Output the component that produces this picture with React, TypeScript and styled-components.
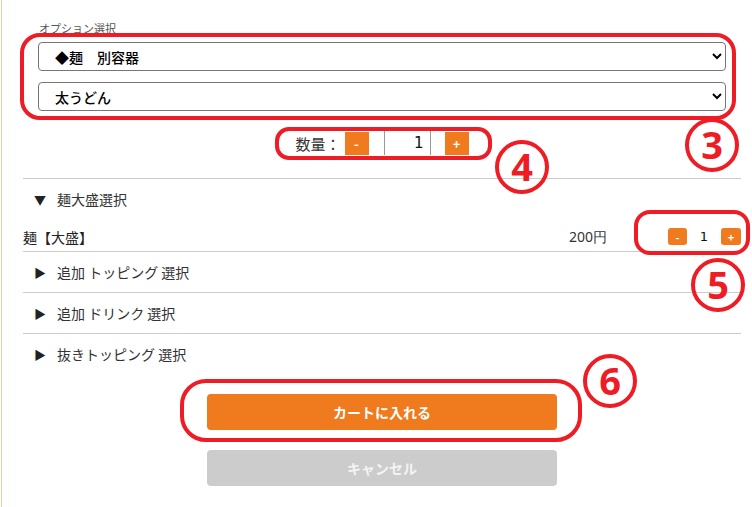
import styled, { createGlobalStyle } from 'styled-components';

const GlobalStyle = createGlobalStyle`
  body {
    margin: 0;
    background: #fff;
    font-family: "Noto Sans CJK JP", "Noto Sans", sans-serif;
    color: #333;
  }
`;

const App = () => {
  return (
    <>
      <GlobalStyle />
      <Page>
        <OptionBlock>
          <OptionLabel>オプション選択</OptionLabel>
          <Select defaultValue="a">
            <option value="a">◆麺　別容器</option>
          </Select>
          <Select defaultValue="b">
            <option value="b">太うどん</option>
          </Select>
        </OptionBlock>

        <QtyRow>
          <QtyLabel>数量：</QtyLabel>
          <SquareButton>-</SquareButton>
          <QtyInput>1</QtyInput>
          <SquareButton>+</SquareButton>
        </QtyRow>

        <Section>
          <SectionHead>
            <Arrow>▼</Arrow>麺大盛選択
          </SectionHead>
          <ItemRow>
            <ItemName>麺【大盛】</ItemName>
            <ItemPrice>200円</ItemPrice>
            <MiniCounter>
              <MiniButton>-</MiniButton>
              <MiniValue>1</MiniValue>
              <MiniButton>+</MiniButton>
            </MiniCounter>
          </ItemRow>
        </Section>
        <Section>
          <SectionHead>
            <Arrow>▶</Arrow>追加 トッピング 選択
          </SectionHead>
        </Section>
        <Section>
          <SectionHead>
            <Arrow>▶</Arrow>追加 ドリンク 選択
          </SectionHead>
        </Section>
        <Section>
          <SectionHead>
            <Arrow>▶</Arrow>抜きトッピング 選択
          </SectionHead>
        </Section>

        <Actions>
          <CartButton>カートに入れる</CartButton>
          <CancelButton>キャンセル</CancelButton>
        </Actions>

        <Loop $x={20} $y={33} $w={716} $h={87} $r={20} />
        <Loop $x={275} $y={127} $w={217} $h={33} $r={14} />
        <Loop $x={634} $y={210} $w={116} $h={45} $r={16} />
        <Loop $x={180} $y={379} $w={402} $h={63} $r={26} />

        <Mark $x={712} $y={145}>3</Mark>
        <Mark $x={522} $y={167}>4</Mark>
        <Mark $x={718} $y={285}>5</Mark>
        <Mark $x={610} $y={381}>6</Mark>
      </Page>
    </>
  );
};

export default App;

const Page = styled.div`
  position: relative;
  box-sizing: border-box;
  min-height: 507px;
  margin-left: 1px;
  padding: 22px 11px 0 21px;
  border-left: 1px solid #e2cfa8;
  overflow: hidden;
`;

const OptionBlock = styled.div`
  display: flex;
  flex-direction: column;
  gap: 11px;
  padding: 0 15px;
`;

const OptionLabel = styled.div`
  font-size: 11px;
  line-height: 12px;
  color: #555;
  margin-left: 1px;
  margin-bottom: -3px;
`;

const Select = styled.select`
  height: 29px;
  width: 100%;
  padding: 0 10px 0 12px;
  border: 1px solid #767676;
  border-radius: 4px;
  background: #fff;
  font-family: "Noto Sans CJK JP", sans-serif;
  font-size: 14px;
  font-weight: 500;
  color: #000;
`;

const QtyRow = styled.div`
  display: flex;
  justify-content: center;
  align-items: center;
  height: 24px;
  margin: 20px 0 23px;
`;

const QtyLabel = styled.span`
  font-size: 15px;
  color: #333;
  margin-right: 4px;
`;

const SquareButton = styled.span`
  display: flex;
  align-items: center;
  justify-content: center;
  width: 24px;
  height: 23px;
  background: #f07a1e;
  color: #fff;
  font-size: 13px;
  font-weight: 700;
`;

const QtyInput = styled.span`
  display: flex;
  align-items: center;
  justify-content: flex-end;
  box-sizing: border-box;
  width: 47px;
  height: 24px;
  margin: 0 14px 0 15px;
  padding-right: 6px;
  border-left: 1px solid #999;
  border-right: 1px solid #999;
  font-family: "DejaVu Sans", sans-serif;
  font-size: 15px;
  color: #111;
`;

const Section = styled.div`
  border-top: 1px solid #ccc;
  &:nth-of-type(2) {
    border-top: 2px solid #ccc;
  }
  &:last-of-type {
    border-bottom: 1px solid #ccc;
  }
`;

const SectionHead = styled.div`
  display: flex;
  align-items: center;
  height: 40px;
  padding-left: 11px;
  font-size: 14px;
  color: #333;
`;

const Arrow = styled.span`
  display: inline-block;
  width: 23px;
  font-size: 12px;
  color: #222;
`;

const ItemRow = styled.div`
  display: flex;
  align-items: center;
  box-sizing: border-box;
  height: 32px;
  padding-top: 3px;
  font-size: 14px;
`;

const ItemName = styled.span`
  flex: 1;
  color: #222;
`;

const ItemPrice = styled.span`
  margin-right: 61px;
  font-family: "Noto Sans", sans-serif;
  font-size: 14px;
  color: #333;
`;

const MiniCounter = styled.div`
  display: flex;
  align-items: center;
  width: 73px;
  justify-content: space-between;
`;

const MiniButton = styled.span`
  display: flex;
  align-items: center;
  justify-content: center;
  width: 19px;
  height: 17px;
  border-radius: 3px;
  background: #f07a1e;
  color: #fff;
  font-size: 11px;
  font-weight: 700;
  &:last-child {
    width: 20px;
  }
`;

const MiniValue = styled.span`
  font-family: "DejaVu Sans", sans-serif;
  font-size: 13px;
  color: #111;
`;

const Actions = styled.div`
  display: flex;
  flex-direction: column;
  align-items: center;
  gap: 20px;
  padding-top: 20px;
`;

const BaseButton = styled.div`
  display: flex;
  align-items: center;
  justify-content: center;
  width: 350px;
  height: 36px;
  border-radius: 4px;
  color: #fff;
  font-size: 14px;
  font-weight: 700;
`;

const CartButton = styled(BaseButton)`
  background: #f07a1e;
`;

const CancelButton = styled(BaseButton)`
  background: #cccccc;
  color: #f4f4f4;
`;

const Loop = styled.div<{ $x: number; $y: number; $w: number; $h: number; $r: number }>`
  position: absolute;
  left: ${(p) => p.$x - 2}px;
  top: ${(p) => p.$y}px;
  width: ${(p) => p.$w}px;
  height: ${(p) => p.$h}px;
  box-sizing: border-box;
  border: 4px solid #ee1c25;
  border-radius: ${(p) => p.$r}px;
  pointer-events: none;
`;

const Mark = styled.div<{ $x: number; $y: number }>`
  position: absolute;
  left: ${(p) => p.$x - 2 - 27}px;
  top: ${(p) => p.$y - 27}px;
  width: 54px;
  height: 54px;
  box-sizing: border-box;
  display: flex;
  align-items: center;
  justify-content: center;
  border: 4px solid #ee1c25;
  border-radius: 50%;
  color: #ee1c25;
  font-family: "Noto Sans", "DejaVu Sans", sans-serif;
  font-size: 38px;
  font-weight: 700;
  line-height: 1;
  padding-bottom: 2px;
`;
